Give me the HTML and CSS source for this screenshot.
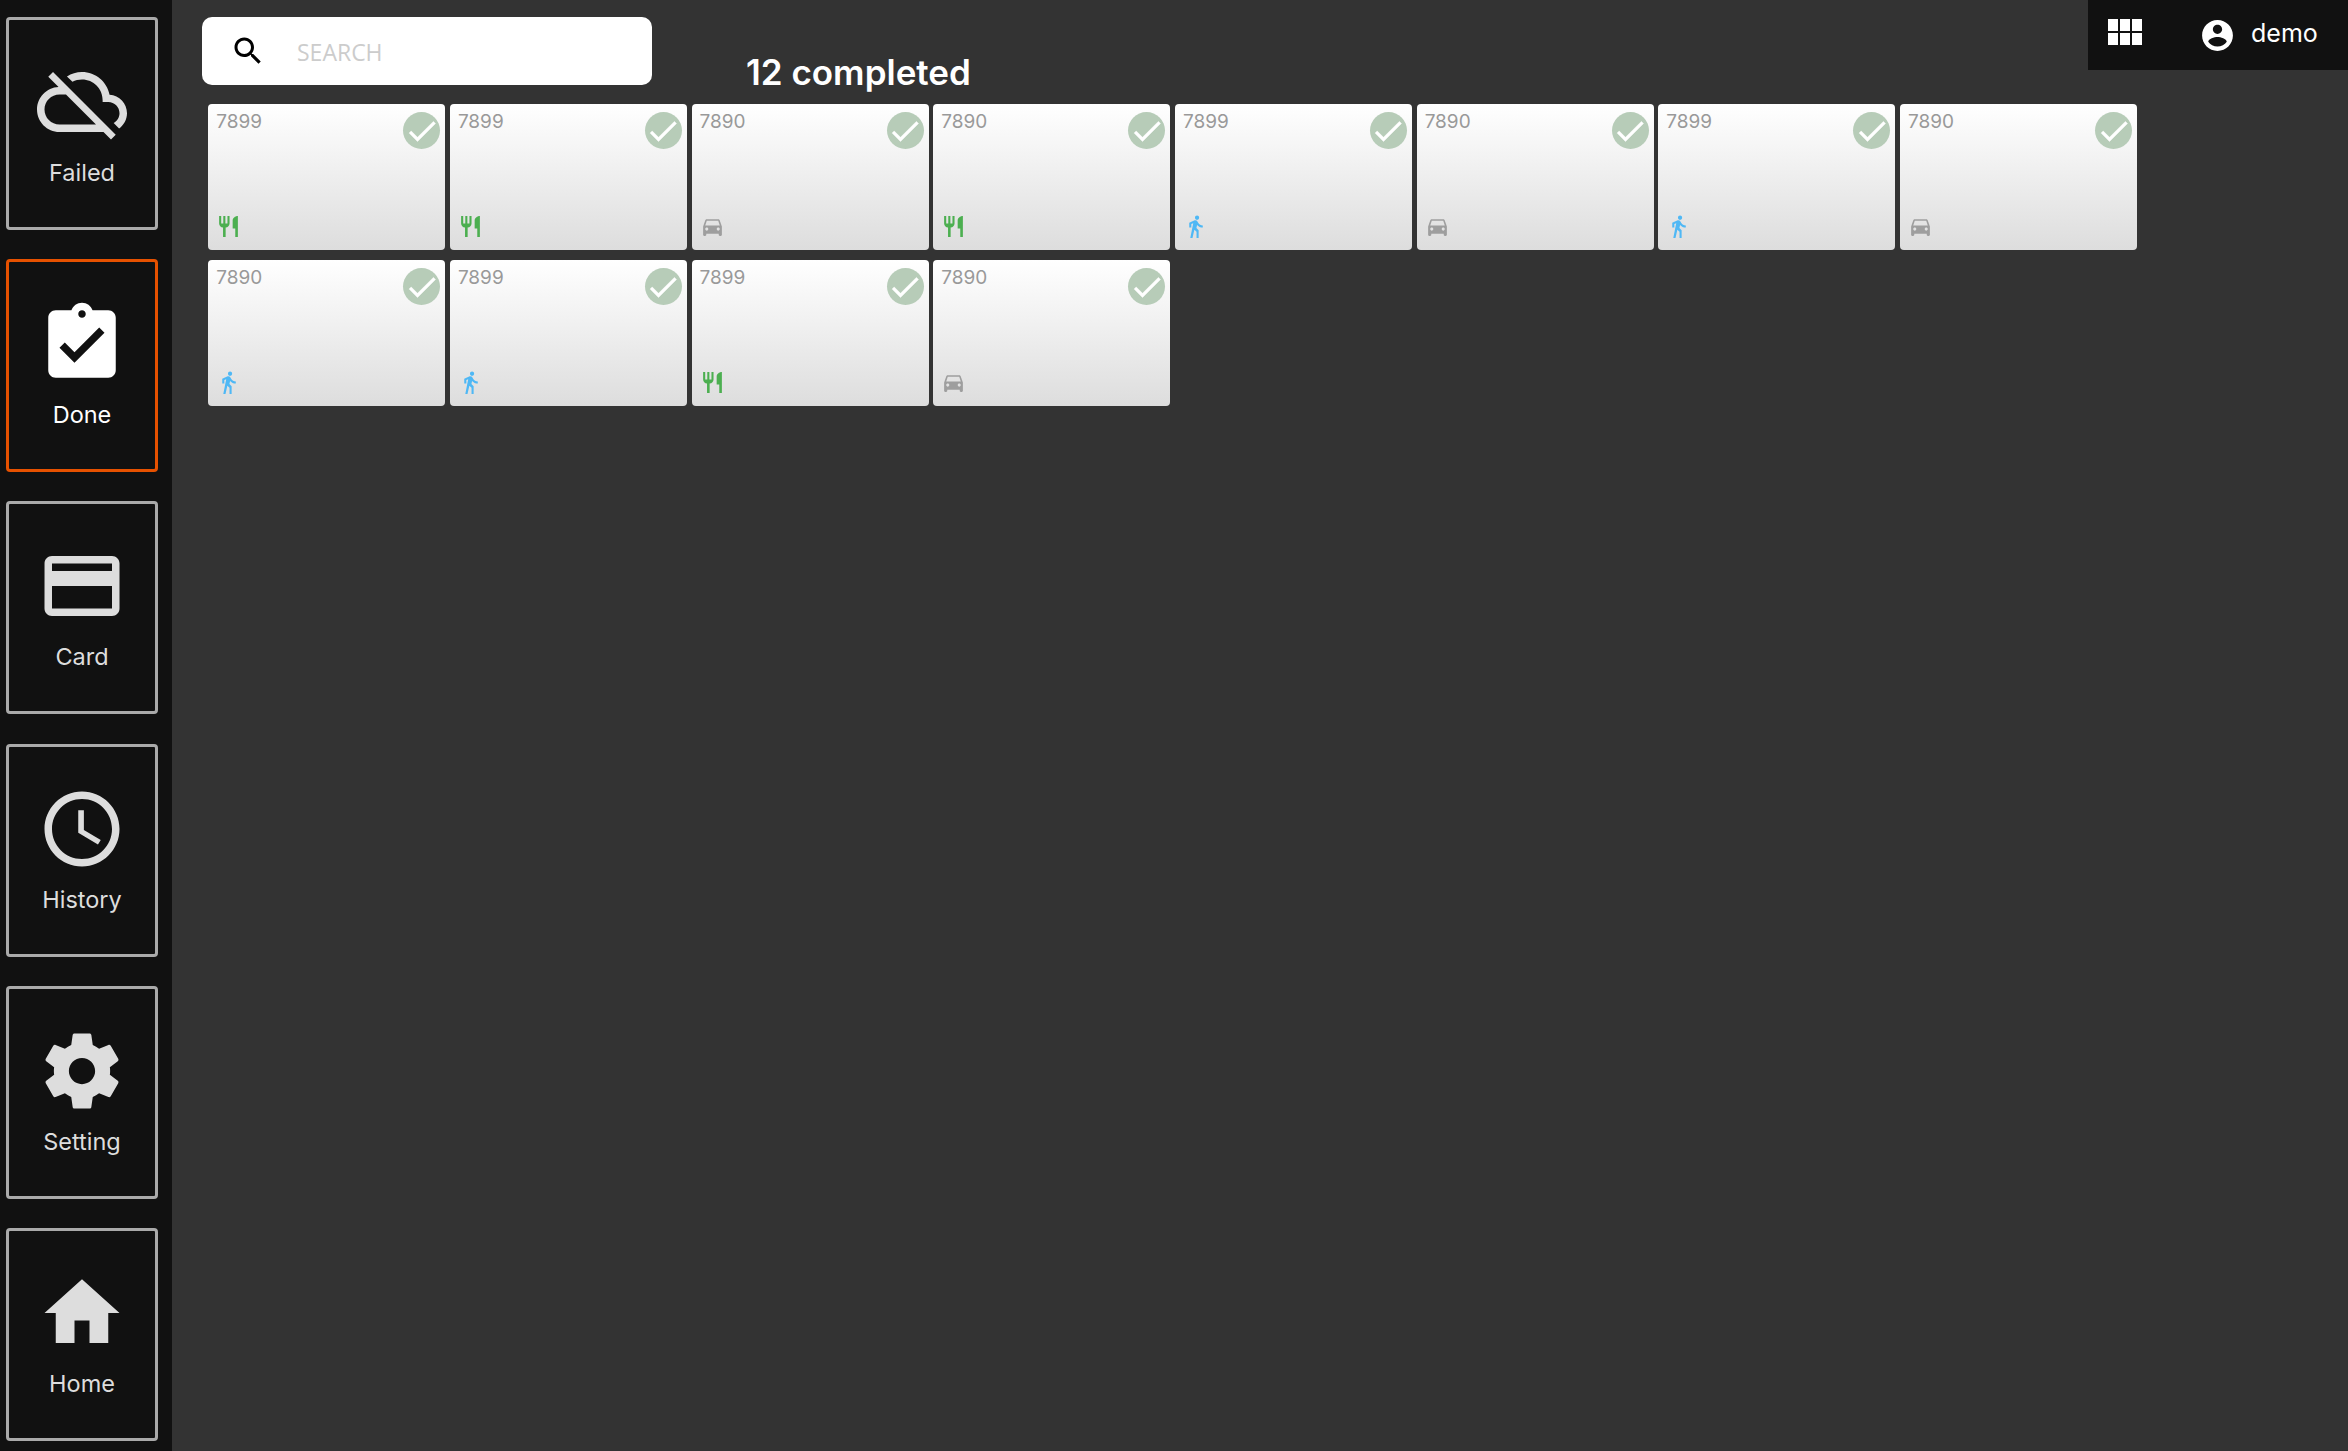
FILE: index.html
```html
<!DOCTYPE html>
<html lang="en">
<head>
    <meta charset="UTF-8">
    <meta name="viewport" content="width=device-width, initial-scale=1.0">
    <title>Completed</title>
    <link rel="stylesheet" href="styles.css">
</head>
<body>
    <svg class="sprite" xmlns="http://www.w3.org/2000/svg">
        <symbol id="i-cloud-off" viewBox="0 0 24 24"><path d="M19.35 10.04C18.67 6.59 15.64 4 12 4c-1.48 0-2.85.43-4.01 1.17l1.46 1.46C10.21 6.23 11.08 6 12 6c3.04 0 5.5 2.46 5.5 5.5v.5H19c1.66 0 3 1.34 3 3 0 1.13-.64 2.11-1.56 2.62l1.45 1.45C23.16 18.16 24 16.68 24 15c0-2.64-2.05-4.78-4.65-4.96zM3 5.27l2.75 2.74C2.56 8.15 0 10.77 0 14c0 3.31 2.69 6 6 6h11.73l2 2L21 20.73 4.27 4 3 5.27zM7.73 10l8 8H6c-2.21 0-4-1.79-4-4s1.79-4 4-4h1.73z"/></symbol>
        <symbol id="i-done" viewBox="0 0 24 24"><path d="M19 3h-4.18C14.4 1.84 13.3 1 12 1c-1.3 0-2.4.84-2.82 2H5c-1.1 0-2 .9-2 2v14c0 1.1.9 2 2 2h14c1.1 0 2-.9 2-2V5c0-1.1-.9-2-2-2zm-7 0c.55 0 1 .45 1 1s-.45 1-1 1-1-.45-1-1 .45-1 1-1zm-2 14l-4-4 1.41-1.41L10 14.17l6.59-6.59L18 9l-8 8z"/></symbol>
        <symbol id="i-card" viewBox="0 0 24 24"><path d="M20 4H4c-1.11 0-1.99.89-1.99 2L2 18c0 1.11.89 2 2 2h16c1.11 0 2-.89 2-2V6c0-1.11-.89-2-2-2zm0 14H4v-6h16v6zm0-10H4V6h16v2z"/></symbol>
        <symbol id="i-clock" viewBox="0 0 24 24"><path d="M11.99 2C6.47 2 2 6.48 2 12s4.47 10 9.99 10C17.52 22 22 17.52 22 12S17.52 2 11.99 2zM12 20c-4.42 0-8-3.58-8-8s3.58-8 8-8 8 3.58 8 8-3.58 8-8 8zm.5-13H11v6l5.25 3.15.75-1.23-4.5-2.67z"/></symbol>
        <symbol id="i-gear" viewBox="0 0 24 24"><path d="M19.43 12.98c.04-.32.07-.64.07-.98s-.03-.66-.07-.98l2.11-1.65c.19-.15.24-.42.12-.64l-2-3.46c-.12-.22-.39-.3-.61-.22l-2.49 1c-.52-.4-1.08-.73-1.69-.98l-.38-2.65C14.46 2.18 14.25 2 14 2h-4c-.25 0-.46.18-.49.42l-.38 2.65c-.61.25-1.17.59-1.69.98l-2.49-1c-.23-.09-.49 0-.61.22l-2 3.46c-.13.22-.07.49.12.64l2.11 1.65c-.04.32-.07.65-.07.98s.03.66.07.98l-2.11 1.65c-.19.15-.24.42-.12.64l2 3.46c.12.22.39.3.61.22l2.49-1c.52.4 1.08.73 1.69.98l.38 2.65c.03.24.24.42.49.42h4c.25 0 .46-.18.49-.42l.38-2.65c.61-.25 1.17-.59 1.69-.98l2.49 1c.23.09.49 0 .61-.22l2-3.46c.12-.22.07-.49-.12-.64l-2.11-1.65zM12 15.5c-1.93 0-3.5-1.57-3.5-3.5s1.57-3.5 3.5-3.5 3.5 1.57 3.5 3.5-1.57 3.5-3.5 3.5z"/></symbol>
        <symbol id="i-home" viewBox="0 0 24 24"><path d="M10 20v-6h4v6h5v-8h3L12 3 2 12h3v8z"/></symbol>
        <symbol id="i-search" viewBox="0 0 24 24"><path d="M15.5 14h-.79l-.28-.27C15.41 12.59 16 11.11 16 9.5 16 5.91 13.09 3 9.5 3S3 5.91 3 9.5 5.91 16 9.5 16c1.61 0 3.09-.59 4.23-1.57l.27.28v.79l5 4.99L20.49 19l-4.99-5zm-6 0C7.01 14 5 11.99 5 9.5S7.01 5 9.5 5 14 7.01 14 9.5 11.99 14 9.5 14z"/></symbol>
        <symbol id="i-module" viewBox="0 0 24 24"><path d="M4 11h5V5H4v6zm0 7h5v-6H4v6zm6 0h5v-6h-5v6zm6 0h5v-6h-5v6zm-6-7h5V5h-5v6zm6-6v6h5V5h-5z"/></symbol>
        <symbol id="i-user" viewBox="0 0 24 24"><path d="M12 2C6.48 2 2 6.48 2 12s4.48 10 10 10 10-4.48 10-10S17.52 2 12 2zm0 3c1.66 0 3 1.34 3 3s-1.34 3-3 3-3-1.34-3-3 1.34-3 3-3zm0 14.2c-2.5 0-4.71-1.28-6-3.22.03-1.99 4-3.08 6-3.08 1.99 0 5.97 1.09 6 3.08-1.29 1.94-3.5 3.22-6 3.22z"/></symbol>
        <symbol id="i-food" viewBox="0 0 24 24"><path d="M11 9H9V2H7v7H5V2H3v7c0 2.12 1.66 3.84 3.75 3.97V22h2.5v-9.03C11.34 12.84 13 11.12 13 9V2h-2v7zm5-3v8h2.5v8H21V2c-2.76 0-5 2.24-5 4z"/></symbol>
        <symbol id="i-car" viewBox="0 0 24 24"><path d="M18.92 6.01C18.72 5.42 18.16 5 17.5 5h-11c-.66 0-1.21.42-1.42 1.01L3 12v8c0 .55.45 1 1 1h1c.55 0 1-.45 1-1v-1h12v1c0 .55.45 1 1 1h1c.55 0 1-.45 1-1v-8l-2.08-5.99zM6.5 16c-.83 0-1.5-.67-1.5-1.5S5.67 13 6.5 13s1.5.67 1.5 1.5S7.33 16 6.5 16zm11 0c-.83 0-1.5-.67-1.5-1.5s.67-1.5 1.5-1.5 1.5.67 1.5 1.5-.67 1.5-1.5 1.5zM5 11l1.5-4.5h11L19 11H5z"/></symbol>
        <symbol id="i-walk" viewBox="0 0 24 24"><path d="M13.5 5.5c1.1 0 2-.9 2-2s-.9-2-2-2-2 .9-2 2 .9 2 2 2zM9.8 8.9L7 23h2.1l1.8-8 2.1 2v6h2v-7.5l-2.1-2 .6-3C14.8 12 16.8 13 19 13v-2c-1.9 0-3.5-1-4.3-2.4l-1-1.6c-.4-.6-1-1-1.7-1-.3 0-.5.1-.8.1L6 8.3V13h2V9.6l1.8-.7"/></symbol>
        <symbol id="i-check" viewBox="0 0 24 24"><path d="M9 16.2L4.8 12l-1.4 1.4L9 19 21 7l-1.4-1.4L9 16.2z"/></symbol>
    </svg>

    <div class="app">
        <nav class="sidebar">
            <a class="nav-btn"><svg class="nav-icon"><use href="#i-cloud-off"/></svg><span>Failed</span></a>
            <a class="nav-btn active"><svg class="nav-icon"><use href="#i-done"/></svg><span>Done</span></a>
            <a class="nav-btn"><svg class="nav-icon"><use href="#i-card"/></svg><span>Card</span></a>
            <a class="nav-btn"><svg class="nav-icon"><use href="#i-clock"/></svg><span>History</span></a>
            <a class="nav-btn"><svg class="nav-icon"><use href="#i-gear"/></svg><span>Setting</span></a>
            <a class="nav-btn"><svg class="nav-icon"><use href="#i-home"/></svg><span>Home</span></a>
        </nav>

        <main class="main">
            <div class="toolbar">
                <div class="search">
                    <svg class="search-icon"><use href="#i-search"/></svg>
                    <input type="text" placeholder="SEARCH">
                </div>
                <h1 class="count">12 completed</h1>
            </div>

            <div class="cards">
                <div class="card"><span class="num">7899</span><div class="tick"><svg><use href="#i-check"/></svg></div><svg class="kind food"><use href="#i-food"/></svg></div>
                <div class="card"><span class="num">7899</span><div class="tick"><svg><use href="#i-check"/></svg></div><svg class="kind food"><use href="#i-food"/></svg></div>
                <div class="card"><span class="num">7890</span><div class="tick"><svg><use href="#i-check"/></svg></div><svg class="kind car"><use href="#i-car"/></svg></div>
                <div class="card"><span class="num">7890</span><div class="tick"><svg><use href="#i-check"/></svg></div><svg class="kind food"><use href="#i-food"/></svg></div>
                <div class="card"><span class="num">7899</span><div class="tick"><svg><use href="#i-check"/></svg></div><svg class="kind walk"><use href="#i-walk"/></svg></div>
                <div class="card"><span class="num">7890</span><div class="tick"><svg><use href="#i-check"/></svg></div><svg class="kind car"><use href="#i-car"/></svg></div>
                <div class="card"><span class="num">7899</span><div class="tick"><svg><use href="#i-check"/></svg></div><svg class="kind walk"><use href="#i-walk"/></svg></div>
                <div class="card"><span class="num">7890</span><div class="tick"><svg><use href="#i-check"/></svg></div><svg class="kind car"><use href="#i-car"/></svg></div>
                <div class="card"><span class="num">7890</span><div class="tick"><svg><use href="#i-check"/></svg></div><svg class="kind walk"><use href="#i-walk"/></svg></div>
                <div class="card"><span class="num">7899</span><div class="tick"><svg><use href="#i-check"/></svg></div><svg class="kind walk"><use href="#i-walk"/></svg></div>
                <div class="card"><span class="num">7899</span><div class="tick"><svg><use href="#i-check"/></svg></div><svg class="kind food"><use href="#i-food"/></svg></div>
                <div class="card"><span class="num">7890</span><div class="tick"><svg><use href="#i-check"/></svg></div><svg class="kind car"><use href="#i-car"/></svg></div>
            </div>
        </main>

        <div class="topbar">
            <svg class="apps-icon"><use href="#i-module"/></svg>
            <svg class="user-icon"><use href="#i-user"/></svg>
            <span class="user-name">demo</span>
        </div>
    </div>
</body>
</html>
```

FILE: styles.css
```css
* {
    box-sizing: border-box;
}
body {
    margin: 0;
    background: #333333;
    font-family: "Inter", "Liberation Sans", sans-serif;
    overflow: hidden;
}
.sprite {
    display: none;
}
.app {
    display: flex;
    height: 1451px;
}

/* left menu */
.sidebar {
    width: 172px;
    flex-shrink: 0;
    background: #111111;
    padding: 17px 14px 0 6px;
    display: flex;
    flex-direction: column;
    gap: 29.2px;
}
.nav-btn {
    height: 213px;
    border: 3px solid #aaaaaa;
    border-radius: 4px;
    padding-top: 37px;
    display: flex;
    flex-direction: column;
    align-items: center;
    color: #dddddd;
    fill: #dddddd;
    font-size: 23.5px;
    line-height: 26px;
}
.nav-btn.active {
    border-color: #e65100;
    color: #ffffff;
    fill: #ffffff;
}
.nav-icon {
    width: 90px;
    height: 90px;
    margin-bottom: 13px;
}

/* main */
.main {
    flex: 1;
    padding-left: 30px;
}
.toolbar {
    height: 104px;
    padding-top: 17px;
    display: flex;
    align-items: flex-start;
}
.search {
    width: 450px;
    height: 68px;
    background: #ffffff;
    border-radius: 10px;
    padding-left: 28px;
    display: flex;
    align-items: center;
    gap: 31px;
}
.search-icon {
    width: 36px;
    height: 36px;
    flex-shrink: 0;
    fill: #000000;
}
.search input {
    border: none;
    outline: none;
    background: none;
    width: 300px;
    padding: 2px 0 0;
    font-family: "Open Sans", sans-serif;
    font-size: 23px;
}
.search input::placeholder {
    color: #cccccc;
    opacity: 1;
}
.count {
    margin: 35px 0 0 94px;
    color: #ffffff;
    font-size: 35px;
    line-height: 40px;
    font-weight: 600;
}

/* cards */
.cards {
    margin-left: 6.2px;
    display: grid;
    grid-template-columns: repeat(8, 237px);
    grid-auto-rows: 146px;
    column-gap: 4.7px;
    row-gap: 10px;
}
.card {
    position: relative;
    border-radius: 4px;
    background: linear-gradient(#ffffff, #dddddd);
    padding: 7px 8px 11px;
    display: flex;
    flex-direction: column;
    justify-content: space-between;
    align-items: flex-start;
}
.num {
    color: #999999;
    font-size: 19px;
    line-height: 22px;
}
.tick {
    position: absolute;
    top: 8px;
    right: 5px;
    width: 37px;
    height: 37px;
    border-radius: 50%;
    background: #b7ccb8;
    display: flex;
    align-items: center;
    justify-content: center;
}
.tick svg {
    width: 36px;
    height: 36px;
    fill: #ffffff;
    stroke: #ffffff;
    stroke-width: 0.3;
}
.kind {
    width: 25px;
    height: 25px;
}
.food {
    fill: #4caf50;
}
.car {
    fill: #9e9e9e;
}
.walk {
    fill: #4fb8f5;
}

/* top right corner */
.topbar {
    position: absolute;
    top: 0;
    right: 0;
    width: 260px;
    height: 70px;
    background: #111111;
    display: flex;
    align-items: center;
    padding-left: 12px;
    color: #ffffff;
    fill: #ffffff;
}
.apps-icon {
    width: 48px;
    height: 48px;
    margin-top: -5px;
}
.user-icon {
    width: 37px;
    height: 37px;
    margin-left: 51px;
}
.user-name {
    margin: -5px 0 0 15px;
    font-size: 25px;
}
```
